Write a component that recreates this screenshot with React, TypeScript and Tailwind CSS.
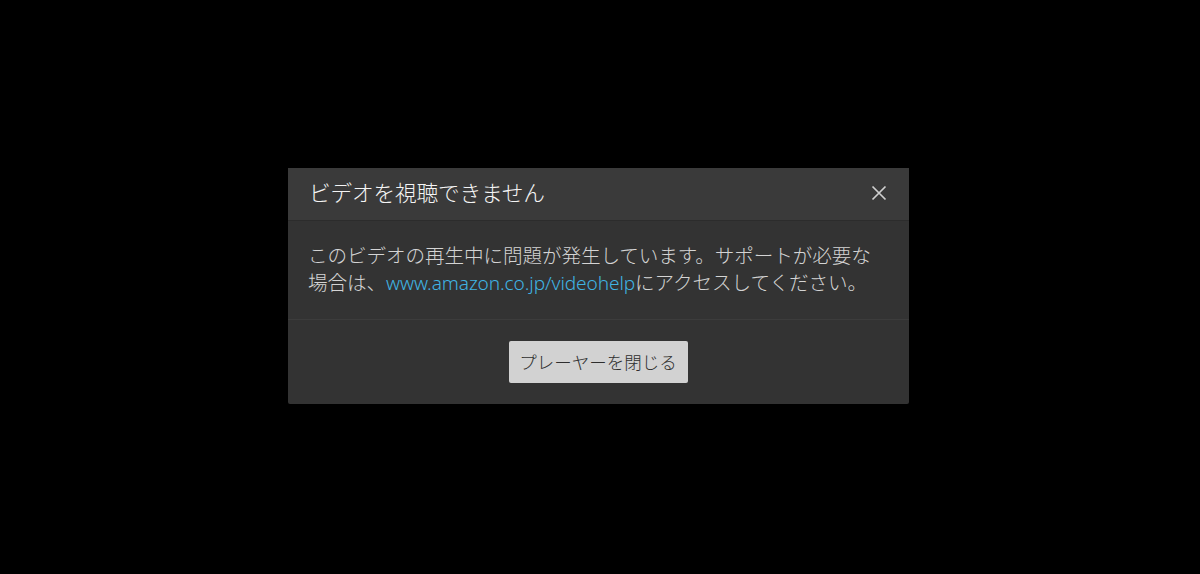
import React from "react";

export default function App() {
  return (
    <div
      className="w-[1200px] h-[574px] bg-black flex items-start justify-start pl-[288px] pt-[168px]"
      style={{ fontFamily: '"Noto Sans", "Noto Sans CJK JP", sans-serif' }}
    >
      <div className="w-[621px] bg-[#333333] rounded-[2px] flex flex-col">
        <div className="h-[53px] bg-[#3a3a3a] flex items-center justify-between pl-[21px] pr-[22px] border-b border-[#2c2c2c]">
          <div className="text-[21.7px] text-[#f4f4f4] font-light leading-none tracking-[-0.2px] mt-[-2px]">ビデオを視聴できません</div>
          <svg width="16" height="16" viewBox="0 0 16 16" className="mt-[-2px]">
            <path d="M1.5 1.5 L14.5 14.5 M14.5 1.5 L1.5 14.5" stroke="#cfcfcf" strokeWidth="1.7" />
          </svg>
        </div>
        <div className="h-[99px] px-[20px] pt-[21px] text-[19.6px] font-light leading-[27px] text-[#d4d4d4] tracking-[-0.1px] border-b border-[#3c3c3c] whitespace-nowrap">
          このビデオの再生中に問題が発生しています。サポートが必要な
          <br />
          場合は、
          <span className="text-[#40b3e2] text-[19.1px] leading-[20px]">www.amazon.co.jp/videohelp</span>
          にアクセスしてください。
        </div>
        <div className="h-[84px] flex items-center justify-center">
          <button className="h-[42px] w-[179px] bg-[#d2d2d2] rounded-[2px] text-[17.5px] font-light text-[#2e2e2e] whitespace-nowrap mr-[1px]">
            プレーヤーを閉じる
          </button>
        </div>
      </div>
    </div>
  );
}
